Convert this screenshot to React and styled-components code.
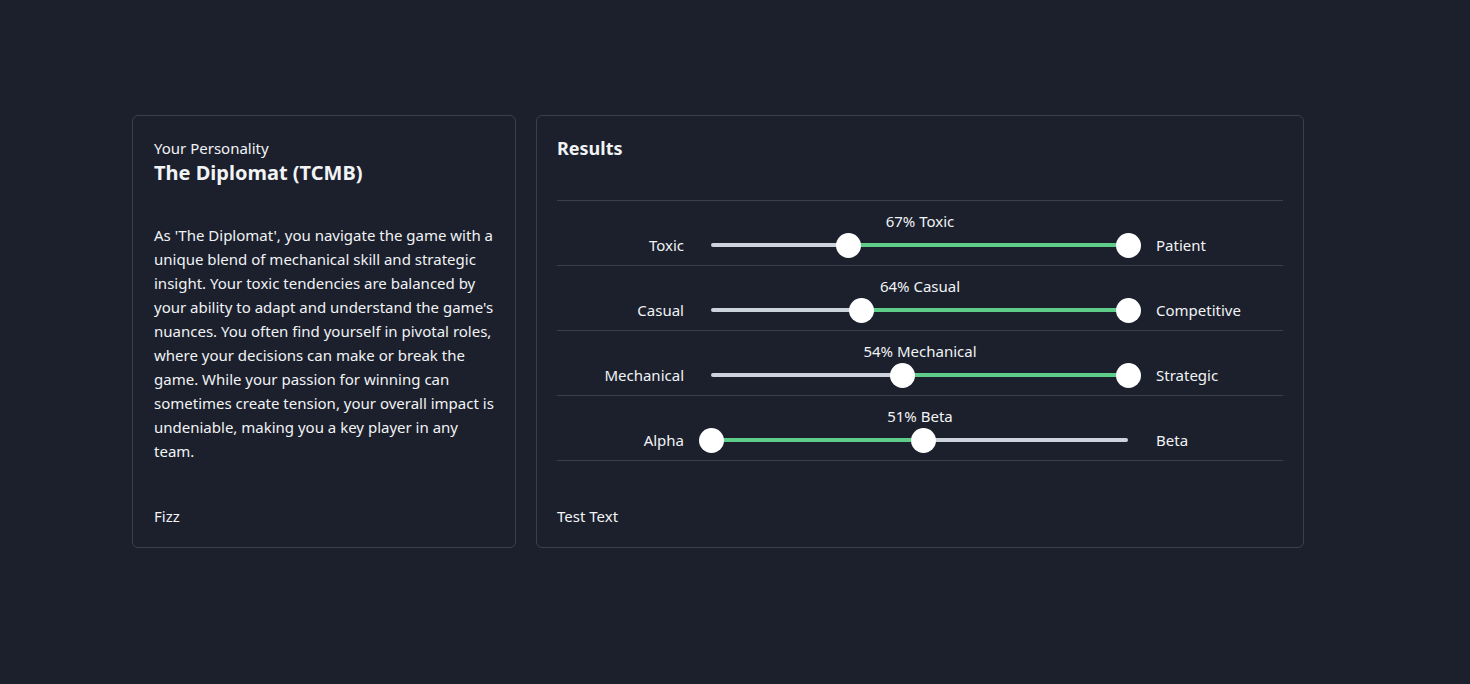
import React from "react"
import styled, { createGlobalStyle } from "styled-components"

const GlobalStyle = createGlobalStyle`
  body {
    margin: 0;
    background: #1b202c;
    color: #f1f3f5;
    font-family: "Noto Sans", "Open Sans", sans-serif;
    font-size: 15px;
  }
`

const Page = styled.div`
  min-height: 684px;
  padding: 115px 0 0 132px;
  box-sizing: border-box;
  display: grid;
  grid-template-columns: 384px 768px;
  gap: 20px;
  align-items: start;
`

const Card = styled.div`
  border: 1px solid #3a3f4b;
  border-radius: 6px;
  height: 433px;
  box-sizing: border-box;
  padding: ${p => (p.$wide ? "20px 20px 19px" : "20px 21px 19px")};
  display: flex;
  flex-direction: column;
`

const Eyebrow = styled.p`
  margin: 0;
  font-size: 15px;
  line-height: 24px;
`

const Title = styled.h2`
  margin: 0;
  font-size: 20px;
  font-weight: 700;
  line-height: 26px;
`

const Description = styled.p`
  margin: 37px 0 0;
  font-size: 15px;
  line-height: 24px;
`

const Footer = styled.p`
  margin: auto 0 0;
  font-size: 15px;
  line-height: 24px;
`

const ResultsTitle = styled.h3`
  margin: 0;
  font-size: 18px;
  font-weight: 700;
  line-height: 24px;
`

const TraitList = styled.div`
  margin-top: 40px;
  border-top: 1px solid #3a3f4b;
`

const TraitRow = styled.div`
  display: grid;
  grid-template-columns: 127px 472px 1fr;
  grid-template-rows: 20px 24px;
  row-gap: 2px;
  padding: 10px 0 8px;
  border-bottom: 1px solid #3a3f4b;
  align-items: center;
`

const Percent = styled.div`
  grid-column: 2;
  grid-row: 1;
  text-align: center;
  font-size: 15px;
  line-height: 20px;
`

const SideLabel = styled.div`
  grid-row: 2;
  font-size: 15px;
  line-height: 24px;
  text-align: ${p => (p.$side === "left" ? "right" : "left")};
`

const TrackWrap = styled.div`
  grid-column: 2;
  grid-row: 2;
  margin: 0 28px 0 27px;
  position: relative;
  height: 24px;
`

const Track = styled.div`
  position: absolute;
  left: 0;
  right: 0;
  top: 10px;
  height: 4px;
  border-radius: 2px;
  background: #cdd3dc;
`

const Fill = styled.div`
  position: absolute;
  top: 10px;
  height: 4px;
  background: #5fcd8a;
`

const Thumb = styled.div`
  position: absolute;
  top: -0.5px;
  width: 25px;
  height: 25px;
  margin-left: -12.5px;
  border-radius: 50%;
  background: #ffffff;
`

const traits = [
  { left: "Toxic", right: "Patient", label: "67% Toxic", from: 33, to: 100 },
  { left: "Casual", right: "Competitive", label: "64% Casual", from: 36, to: 100 },
  { left: "Mechanical", right: "Strategic", label: "54% Mechanical", from: 46, to: 100 },
  { left: "Alpha", right: "Beta", label: "51% Beta", from: 0, to: 51 },
]

const Trait = ({ left, right, label, from, to }) => (
  <TraitRow>
    <Percent>{label}</Percent>
    <SideLabel $side="left">{left}</SideLabel>
    <TrackWrap>
      <Track />
      <Fill style={{ left: `${from}%`, width: `${to - from}%` }} />
      <Thumb style={{ left: `${from}%` }} />
      <Thumb style={{ left: `${to}%` }} />
    </TrackWrap>
    <SideLabel $side="right">{right}</SideLabel>
  </TraitRow>
)

export default function App() {
  return (
    <>
      <GlobalStyle />
      <Page>
        <Card>
          <Eyebrow>Your Personality</Eyebrow>
          <Title>The Diplomat (TCMB)</Title>
          <Description>
            As 'The Diplomat', you navigate the game with a unique blend of
            mechanical skill and strategic insight. Your toxic tendencies are
            balanced by your ability to adapt and understand the game's
            nuances. You often find yourself in pivotal roles, where your
            decisions can make or break the game. While your passion for
            winning can sometimes create tension, your overall impact is
            undeniable, making you a key player in any team.
          </Description>
          <Footer>Fizz</Footer>
        </Card>
        <Card $wide>
          <ResultsTitle>Results</ResultsTitle>
          <TraitList>
            {traits.map(t => (
              <Trait key={t.left} {...t} />
            ))}
          </TraitList>
          <Footer>Test Text</Footer>
        </Card>
      </Page>
    </>
  )
}
